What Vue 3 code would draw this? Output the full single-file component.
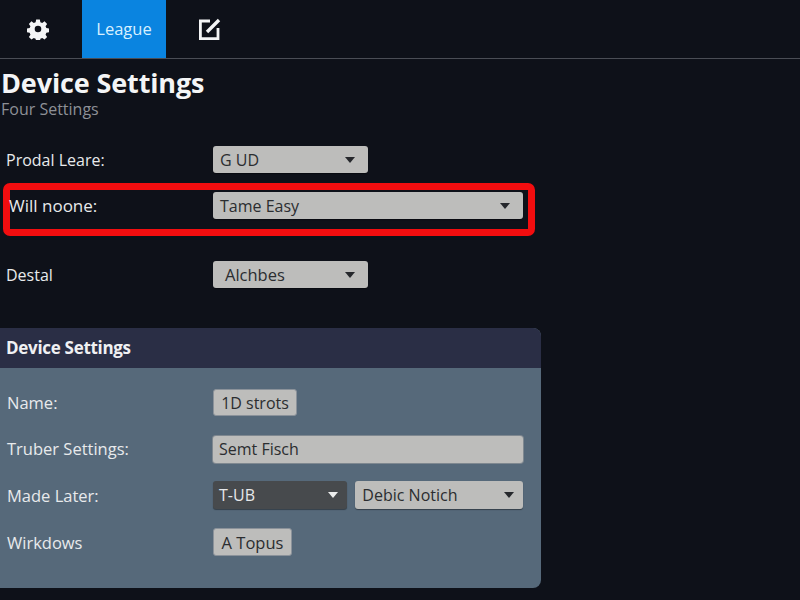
<script setup>
const topRows = [
  { label: 'Prodal Leare:', value: 'G UD' },
  { label: 'Will noone:', value: 'Tame Easy', highlight: true },
  { label: 'Destal', value: 'Alchbes', inset: true }
];
</script>

<template>
  <div class="page">
    <nav class="tabs">
      <button class="tab tab-icon gear" aria-label="Settings">
        <svg width="22" height="22" viewBox="0 0 24 24">
          <path fill="#f4f5f6" fill-rule="evenodd" d="M10 1.500h4l.6 3 2 .85 2.550-1.700 2.800 2.800-1.700 2.550.85 2 3 .6v4l-3 .6-.85 2 1.700 2.550-2.800 2.800-2.550-1.700-2 .85-.6 3h-4l-.6-3-2-.85-2.550 1.700-2.800-2.800 1.700-2.550-.85-2-3-.6v-4l3-.6.85-2-1.700-2.550 2.800-2.800 2.550 1.700 2-.85zM12 8.400a3.600 3.600 0 1 0 0 7.200 3.600 3.600 0 0 0 0-7.200z"/>
        </svg>
      </button>
      <button class="tab active">League</button>
      <button class="tab tab-icon edit" aria-label="Edit">
        <svg width="24" height="24" viewBox="0 0 24 24" fill="none" stroke="#f4f5f6">
          <path stroke-width="2.800" d="M13 4H3.400v17.600H21V11"/>
          <path stroke-width="3.400" d="M10 15 22 3"/>
        </svg>
      </button>
    </nav>

    <header class="heading">
      <h1>Device Settings</h1>
      <p>Four Settings</p>
    </header>

    <section class="top-rows">
      <div v-for="row in topRows" :key="row.label" class="row" :class="{ highlight: row.highlight }">
        <label>{{ row.label }}</label>
        <div class="select" :class="{ wide: row.highlight, inset: row.inset }">
          <span>{{ row.value }}</span><i class="caret"></i>
        </div>
      </div>
    </section>

    <section class="panel">
      <h2>Device Settings</h2>
      <div class="panel-body">
        <div class="row">
          <label>Name:</label>
          <button class="btn name-btn">1D strots</button>
        </div>
        <div class="row">
          <label>Truber Settings:</label>
          <div class="input">Semt Fisch</div>
        </div>
        <div class="row">
          <label>Made Later:</label>
          <div class="pair">
            <div class="select dark"><span>T-UB</span><i class="caret"></i></div>
            <div class="select"><span>Debic Notich</span><i class="caret"></i></div>
          </div>
        </div>
        <div class="row">
          <label>Wirkdows</label>
          <button class="btn topus-btn">A Topus</button>
        </div>
      </div>
    </section>
  </div>
</template>

<style scoped>
.page {
  height: 600px;
  overflow: hidden;
  background: #0e1119;
  color: #e8eaec;
  font-family: "Open Sans", "Noto Sans", sans-serif;
}
.tabs {
  display: flex;
  height: 58px;
  padding-left: 14px;
  border-bottom: 1px solid #4a4d55;
}
.tab {
  border: 0;
  background: transparent;
  color: inherit;
  font: inherit;
  padding: 0;
  display: flex;
  align-items: center;
  justify-content: center;
}
.gear {
  width: 48px;
  margin-right: 20px;
}
.active {
  width: 84px;
  padding-bottom: 2px;
  background: #0a84e0;
  color: #d8f0ff;
  font-size: 16.5px;
}
.edit {
  width: 86px;
}
.heading {
  padding: 7px 0 0 1px;
}
h1 {
  margin: 0;
  font-size: 27px;
  line-height: 34px;
  font-weight: 700;
  letter-spacing: -0.13px;
  color: #f4f5f6;
}
p {
  margin: 0;
  font-size: 16px;
  line-height: 18px;
  color: #8d9096;
}
.top-rows {
  display: flex;
  flex-direction: column;
  margin-top: 28px;
}
.row {
  display: grid;
  grid-template-columns: 207px 1fr;
  align-items: center;
  padding-left: 6px;
  font-size: 16px;
}
.top-rows .row {
  width: 523px;
  box-sizing: border-box;
}
.top-rows .row + .row {
  margin-top: 10px;
}
.top-rows .row.highlight {
  width: 532px;
  margin: 10px 0 15px 3px;
  padding: 2px 5px 10px 0;
  grid-template-columns: 203px 1fr;
  border: 7px solid #f20d0f;
  border-radius: 7px;
  box-sizing: border-box;
  height: 53px;
}
.highlight label {
  margin-left: -1px;
  font-size: 17px;
}
.select {
  width: 155px;
  height: 27px;
  box-sizing: border-box;
  padding: 0 13px 0 7px;
  display: flex;
  align-items: center;
  justify-content: space-between;
  background: #bdbdbb;
  color: #2b2d30;
  border-radius: 3px;
  box-shadow: 0 1px 1px rgba(0, 0, 0, 0.4);
}
.select.wide {
  width: 310px;
}
.select.inset {
  padding-left: 12px;
  font-size: 16.5px;
}
.caret {
  width: 0;
  height: 0;
  border-left: 5px solid transparent;
  border-right: 5px solid transparent;
  border-top: 6px solid #26282c;
}
.panel {
  width: 541px;
  height: 260px;
  margin-top: 40px;
  border-radius: 0 8px 8px 0;
  overflow: hidden;
  background: #56697a;
}
h2 {
  margin: 0;
  height: 40px;
  padding-left: 6px;
  line-height: 40px;
  font-size: 17px;
  font-weight: 700;
  letter-spacing: -0.3px;
  background: #2a2e45;
  color: #f0f1f3;
}
.panel-body {
  display: flex;
  flex-direction: column;
  gap: 19px;
  padding: 21px 0 0 1px;
}
.panel-body .row {
  width: 522px;
  box-sizing: border-box;
  grid-template-columns: 206px 1fr;
}
.panel-body label {
  font-size: 16.5px;
}
.btn {
  justify-self: start;
  height: 27px;
  padding: 0;
  border: 1px solid #8b929a;
  border-radius: 3px;
  background: #bdbdbb;
  color: #2b2d30;
  font: inherit;
}
.name-btn {
  width: 84px;
}
.topus-btn {
  width: 79px;
  height: 28px;
  font-size: 16.5px;
}
.input {
  height: 27px;
  line-height: 27px;
  margin: 1px 0 -1px;
  padding-left: 6px;
  border-radius: 3px;
  background: #bdbdbb;
  color: #2b2d30;
  box-shadow: 0 0 0 1px #7f8890;
}
.pair {
  display: flex;
  gap: 8px;
}
.pair .select {
  width: auto;
  flex: 169 1 0;
  height: 28px;
  padding-right: 9px;
}
.pair .select.dark {
  flex: 133 1 0;
  background: #474a4d;
  color: #e6e8ea;
  padding-left: 6px;
}
.dark .caret {
  border-top-color: #eceded;
}
label {
  color: #e8eaec;
}
</style>

<style>
html, body {
  margin: 0;
  background: #0e1119;
}
</style>
